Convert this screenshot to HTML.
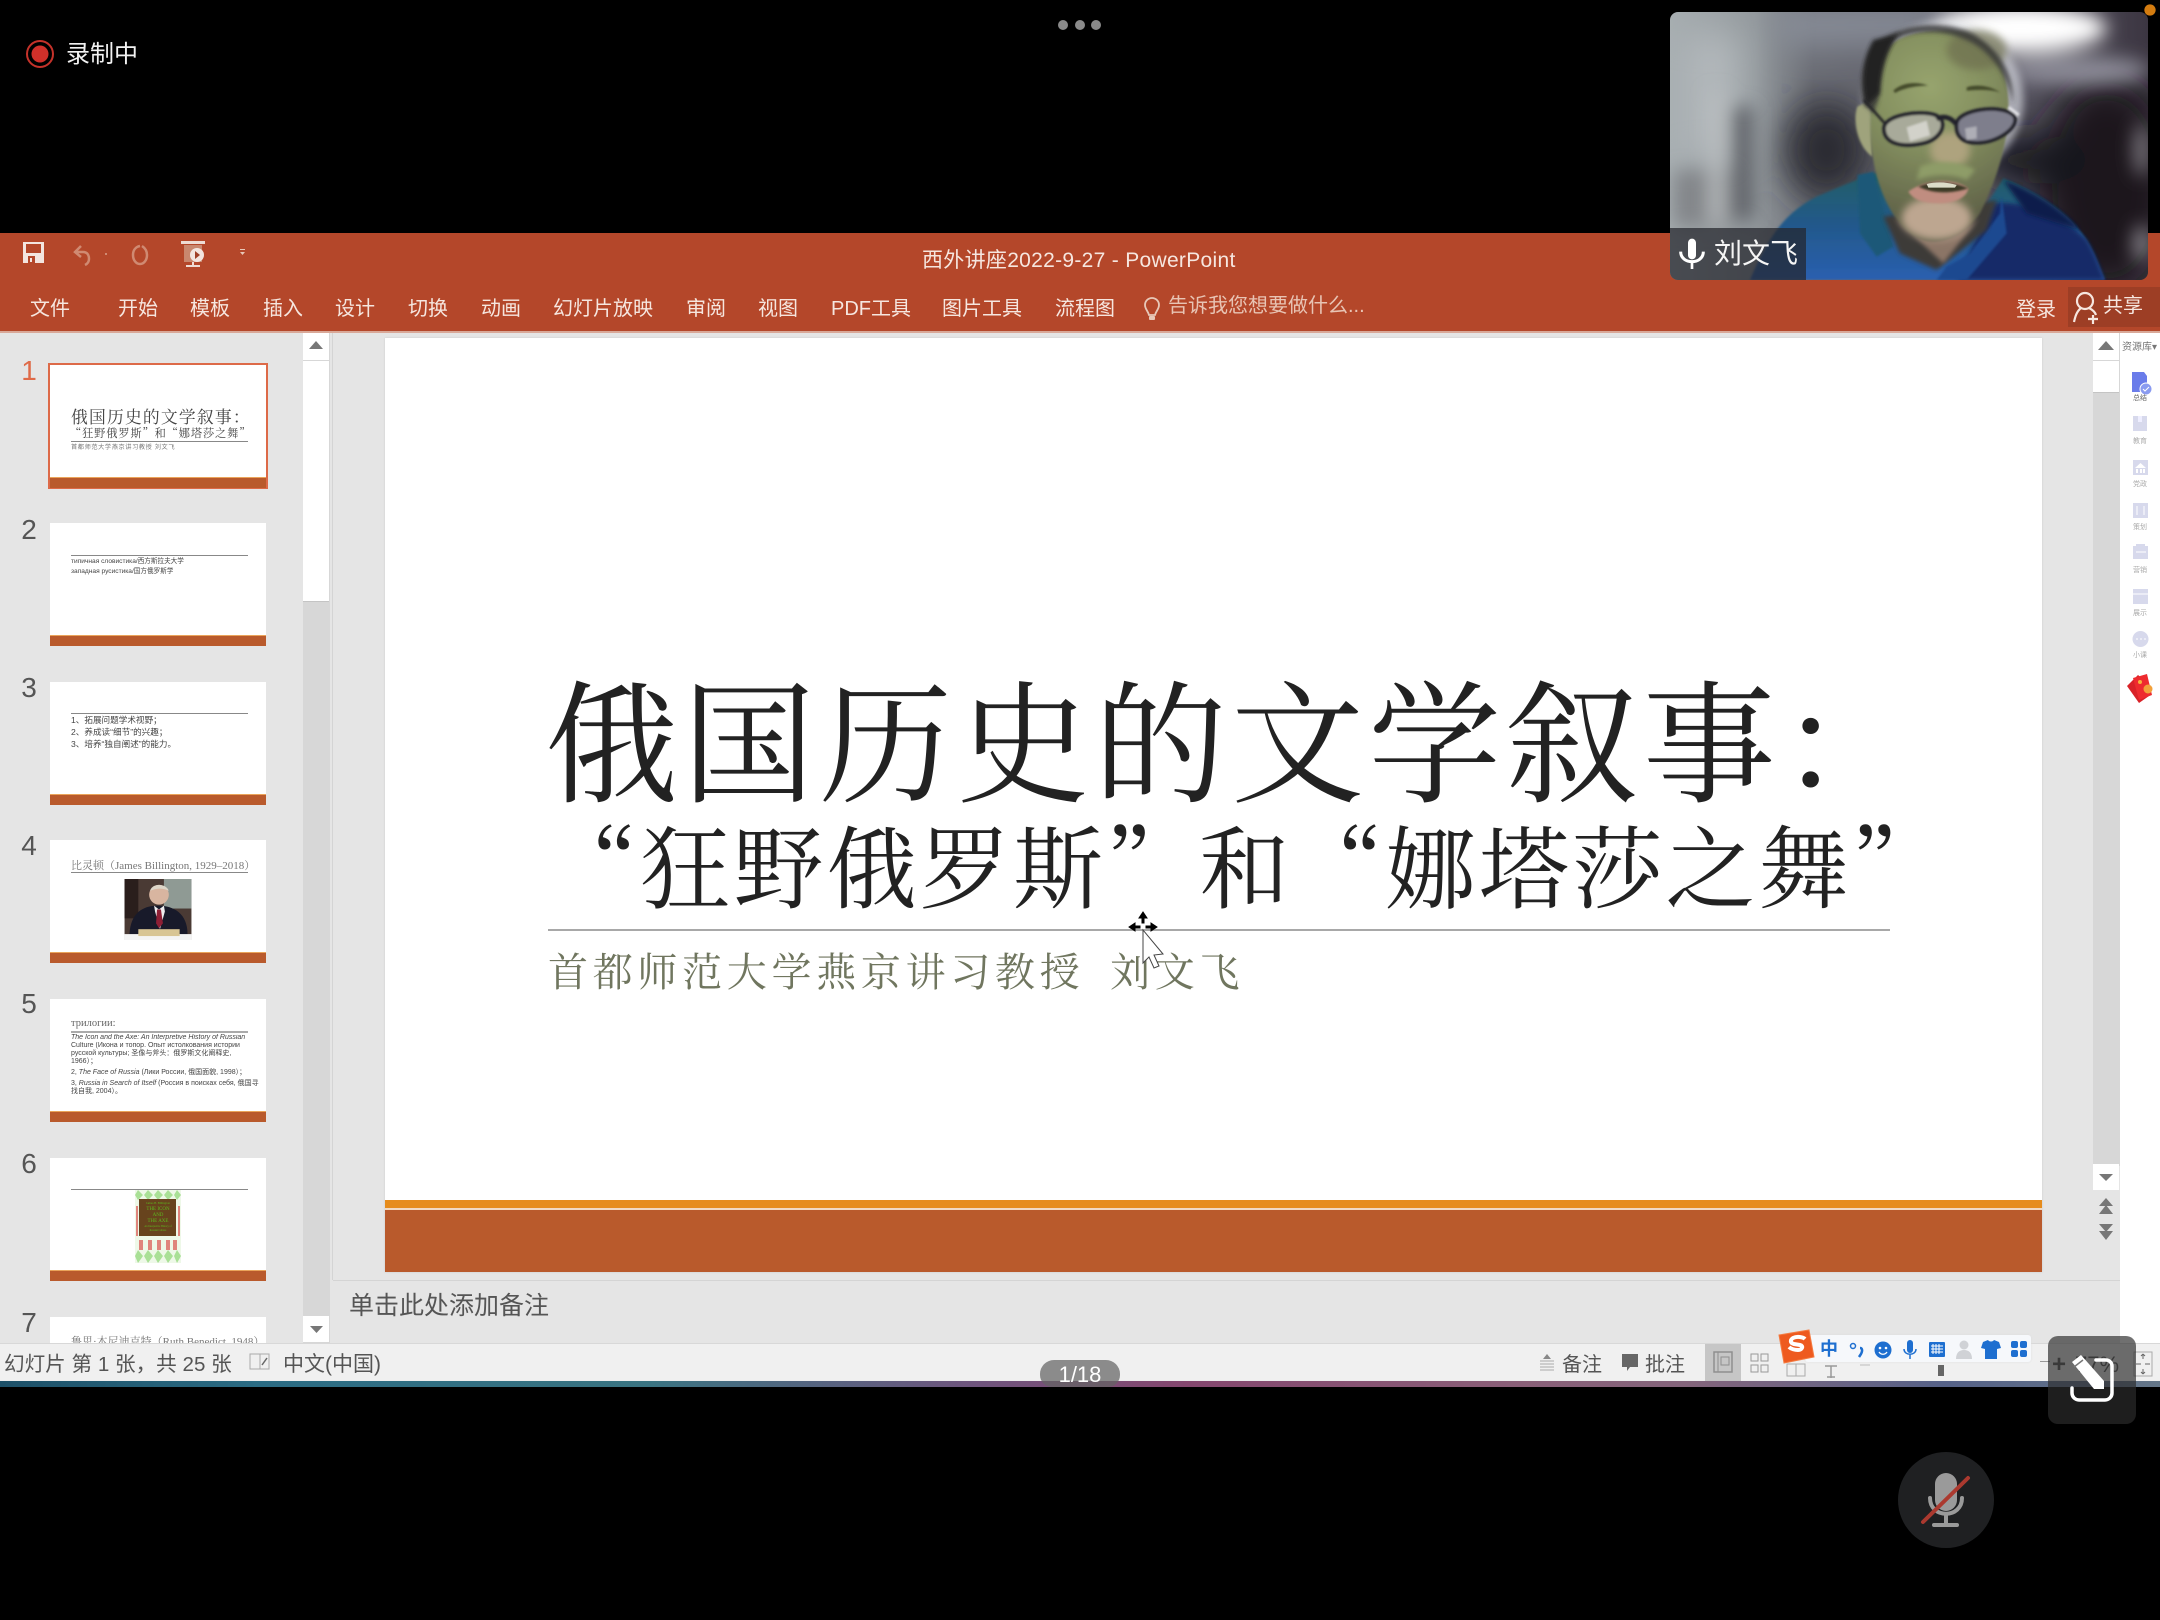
<!DOCTYPE html>
<html lang="zh"><head><meta charset="utf-8"><title>西外讲座</title>
<style>
html,body{margin:0;padding:0;background:#000}
body{width:2160px;height:1620px;position:relative;overflow:hidden;font-family:"Liberation Sans","Noto Sans CJK SC",sans-serif;color:#444}
.a{position:absolute}
.t{position:absolute;white-space:nowrap;line-height:1}
.tab{position:absolute;top:298px;font-size:20px;line-height:22px;color:#f6e6df;white-space:nowrap}
.n{position:absolute;left:20px;font-size:28px;line-height:28px;color:#555;width:18px;text-align:center}
.th{position:absolute;left:50px;width:216px;height:123px;background:#fff;overflow:hidden}
.th .bar{position:absolute;left:0;right:0;bottom:0;height:10px;background:#b95a2c;border-top:1px solid #eaa45a}
.th .ln{position:absolute;left:21px;width:177px;height:1px;background:#888}
.th .s{position:absolute;white-space:nowrap;color:#555;line-height:1;filter:blur(.35px)}
.lb{position:absolute;left:2125px;width:30px;text-align:center;font-size:7px;line-height:8px;color:#aaa}
.serif{font-family:"Liberation Serif","Noto Serif CJK SC",serif}
.cjk{font-family:"Noto Serif CJK SC","Liberation Serif",serif}
</style></head><body>

<!-- ribbon -->
<div class="a" style="left:0;top:233px;width:2160px;height:98px;background:#b4472a"></div>
<div class="a" style="left:0;top:331px;width:2160px;height:2px;background:#d9a898"></div>
<!-- app background -->
<div class="a" style="left:0;top:333px;width:2120px;height:1010px;background:#e5e5e5"></div>
<div class="a" style="left:2120px;top:333px;width:40px;height:1010px;background:#fff"></div>

<!-- QAT -->
<svg class="a" style="left:20px;top:238px" width="230" height="32" viewBox="0 0 230 32">
<path d="M3 4H24V25H3Z" fill="#f3e5df"/><rect x="6" y="6" width="15" height="9" fill="#b4472a"/><rect x="8" y="18" width="7" height="7" fill="#b4472a"/><rect x="10" y="20" width="2" height="4" fill="#f3e5df"/>
<path d="M61 8l-6 6 6 5M55 14h8c5 0 6 4 6 7s-2 5-4 6" fill="none" stroke="#d08a72" stroke-width="2.5"/>
<rect x="85" y="15" width="2" height="2" fill="#d08a72"/>
<path d="M120 8c-5 1-7 5-7 9 0 5 3 9 7 9s7-4 7-9c0-4-2-7-5-9" fill="none" stroke="#d08a72" stroke-width="2.500"/>
<rect x="161" y="3" width="24" height="3" fill="#eedcd4"/>
<path d="M164 7H182V24H164Z" fill="#c9876e"/><circle cx="177" cy="17" r="7" fill="#f3e5df"/><path d="M175 13l5 4-5 4Z" fill="#a04027"/><path d="M172 24v3h-6v2h14v-2h-6v-3Z" fill="#eedcd4"/>
<path d="M220 14h5l-2.500 3ZM220 11h5v1h-5Z" fill="#e8c8b8"/>
</svg>
<div class="t" style="left:922px;top:250px;font-size:21px;line-height:22px;color:#f6e6df;letter-spacing:.3px">西外讲座2022-9-27 - PowerPoint</div>

<div class="tab" style="left:30px">文件</div><div class="tab" style="left:118px">开始</div><div class="tab" style="left:190px">模板</div><div class="tab" style="left:263px">插入</div><div class="tab" style="left:335px">设计</div><div class="tab" style="left:408px">切换</div><div class="tab" style="left:481px">动画</div><div class="tab" style="left:553px">幻灯片放映</div><div class="tab" style="left:686px">审阅</div><div class="tab" style="left:758px">视图</div><div class="tab" style="left:831px">PDF工具</div><div class="tab" style="left:942px">图片工具</div><div class="tab" style="left:1055px">流程图</div>
<svg class="a" style="left:1143px;top:295px" width="18" height="28" viewBox="0 0 18 28"><path d="M9 3a7 7 0 0 0-7 7c0 4 3 6 4 10h6c1-4 4-6 4-10a7 7 0 0 0-7-7Z" fill="none" stroke="#e8c8b8" stroke-width="1.800"/><rect x="6" y="21" width="6" height="4" rx="1" fill="#e8c8b8"/></svg>
<div class="tab" style="left:1168px;top:295px;color:#e8c4b4">告诉我您想要做什么...</div>
<div class="tab" style="left:2016px;top:299px">登录</div>
<div class="a" style="left:2068px;top:287px;width:92px;height:40px;background:#9d3e25"></div>
<svg class="a" style="left:2072px;top:290px" width="30" height="36" viewBox="0 0 30 36"><circle cx="13" cy="11" r="8" fill="none" stroke="#f6e6df" stroke-width="2.200"/><path d="M9 18C4 22 3 28 2 32M17 18c4 2 6 4 7 7" fill="none" stroke="#f6e6df" stroke-width="2.200"/><path d="M21 25v9M16 29h10" stroke="#f6e6df" stroke-width="2.200"/></svg>
<div class="tab" style="left:2103px;top:295px">共享</div>

<!-- thumbs panel -->
<div class="n" style="top:357px;color:#df6a48">1</div>
<div class="a" style="left:48px;top:363px;width:216px;height:122px;border:2px solid #dd6a48;background:#fff"></div>
<div class="th" style="top:365px;height:123px">
  <div class="s serif" style="left:21px;top:45px;font-size:16.800px;letter-spacing:1.200px;color:#444">俄国历史的文学叙事：</div>
  <div class="s cjk" style="left:20px;top:63px;font-size:11.200px;letter-spacing:.9px;color:#444">“狂野俄罗斯”和“娜塔莎之舞”</div>
  <div class="ln" style="top:76px"></div>
  <div class="s" style="left:21px;top:80px;font-size:6.200px;color:#777;letter-spacing:.6px">首都师范大学燕京讲习教授 刘文飞</div>
  <div class="bar"></div>
</div>
<div class="n" style="top:516px">2</div>
<div class="th" style="top:523px">
  <div class="ln" style="top:32px"></div>
  <div class="s" style="left:21px;top:36px;font-size:6.600px;color:#444">типичная словистика/西方斯拉夫大学</div>
  <div class="s" style="left:21px;top:46px;font-size:6.600px;color:#444">западная русистика/国方俄罗斯学</div>
  <div class="bar"></div>
</div>
<div class="n" style="top:674px">3</div>
<div class="th" style="top:682px">
  <div class="ln" style="top:31px"></div>
  <div class="s" style="left:21px;top:34px;font-size:8.600px;color:#444">1、拓展问题学术视野；</div>
  <div class="s" style="left:21px;top:46px;font-size:8.600px;color:#444">2、养成读“细节”的兴趣；</div>
  <div class="s" style="left:21px;top:58px;font-size:8.600px;color:#444">3、培养“独自阐述”的能力。</div>
  <div class="bar"></div>
</div>
<div class="n" style="top:832px">4</div>
<div class="th" style="top:840px">
  <div class="s serif" style="left:21px;top:21px;font-size:11px;color:#777">比灵顿（James Billington, 1929–2018）</div>
  <div class="ln" style="top:32px"></div>
  <svg class="a" style="left:74px;top:39px" width="68" height="61" viewBox="0 0 68 62"><rect width="68" height="62" fill="#4a3a34"/><rect x="40" width="28" height="30" fill="#8f9a94"/><rect x="0" width="14" height="40" fill="#2a1e1c"/><path d="M5 56C6 35 18 27 34 27s30 8 30 29Z" fill="#181a2a"/><circle cx="35" cy="16" r="10" fill="#d8b5a0"/><path d="M26 12c2-8 16-8 19 0-6-3-12-3-19 0Z" fill="#ddd6c8"/><path d="M30 27l5 4 5-4 1 6-5 18-5-18Z" fill="#eee"/><path d="M33 31h4l2 14-4 5-3-5Z" fill="#8e1f35"/><rect x="0" y="56" width="68" height="6" fill="#f4f4f4"/><rect x="14" y="51" width="42" height="7" fill="#d8c594"/></svg>
  <div class="bar"></div>
</div>
<div class="n" style="top:990px">5</div>
<div class="th" style="top:999px">
  <div class="s serif" style="left:21px;top:20px;font-size:10.500px;color:#666">трилогии:</div>
  <div class="a" style="left:21px;top:32px;width:177px;height:2px;background:#aaa"></div>
  <div class="s" style="left:21px;top:35px;font-size:7px;color:#444"><i>The Icon and the Axe: An Interpretive History of Russian</i></div>
  <div class="s" style="left:21px;top:43px;font-size:7px;color:#444">Culture (Икона и топор. Опыт истолкования истории</div>
  <div class="s" style="left:21px;top:51px;font-size:7px;color:#444">русской культуры; 圣像与斧头：俄罗斯文化阐释史,</div>
  <div class="s" style="left:21px;top:59px;font-size:7px;color:#444">1966）；</div>
  <div class="s" style="left:21px;top:70px;font-size:7px;color:#444">2, <i>The Face of Russia</i> (Лики России, 俄国面貌, 1998）；</div>
  <div class="s" style="left:21px;top:81px;font-size:7px;color:#444">3, <i>Russia in Search of Itself</i> (Россия в поисках себя, 俄国寻</div>
  <div class="s" style="left:21px;top:89px;font-size:7px;color:#444">找自我, 2004）。</div>
  <div class="bar"></div>
</div>
<div class="n" style="top:1150px">6</div>
<div class="th" style="top:1158px">
  <div class="ln" style="top:31px"></div>
  <svg class="a" style="left:85px;top:32px" width="46" height="73" viewBox="0 0 46 73"><rect width="46" height="73" fill="#eef8e8"/><g fill="#a9e096"><path d="M3 0l5 5-5 5-3-5ZM13 0l5 5-5 5-4-5ZM23 0l5 5-5 5-4-5ZM33 0l5 5-5 5-4-5ZM42 0l4 5-4 5-3-5Z"/><path d="M3 60l5 6-5 7-3-7ZM13 60l5 6-5 7-4-7ZM23 60l5 6-5 7-4-7ZM33 60l5 6-5 7-4-7ZM42 60l4 6-4 7-3-7Z"/></g><g fill="#e0847c"><rect x="1" y="16" width="2" height="30"/><rect x="43" y="16" width="2" height="30"/><rect x="4" y="50" width="4" height="10"/><rect x="13" y="50" width="4" height="10"/><rect x="22" y="50" width="4" height="10"/><rect x="31" y="50" width="4" height="10"/><rect x="38" y="50" width="4" height="10"/></g><rect x="4" y="9" width="37" height="37" fill="#67431d"/><g fill="#5dbb1e" font-family="Liberation Serif,serif" text-anchor="middle"><text x="23" y="14" font-size="3">James H. Billington</text><text x="23" y="20" font-size="5">THE ICON</text><text x="23" y="26" font-size="5">AND</text><text x="23" y="32" font-size="5">THE AXE</text><text x="23" y="37" font-size="2.600">An Interpretive History of</text><text x="23" y="41" font-size="2.600">Russian Culture</text></g></svg>
  <div class="bar"></div>
</div>
<div class="n" style="top:1309px">7</div>
<div class="th" style="top:1317px;height:26px">
  <div class="s serif" style="left:21px;top:20px;font-size:11px;color:#777">鲁思·本尼迪克特（Ruth Benedict, 1948）</div>
</div>

<!-- thumb scrollbar -->
<div class="a" style="left:303px;top:333px;width:27px;height:1010px;background:#d7d7d7"></div>
<div class="a" style="left:332px;top:333px;width:1px;height:947px;background:#d4d4d4"></div>
<div class="a" style="left:303px;top:333px;width:26px;height:27px;background:#fff"></div>
<div class="a" style="left:303px;top:361px;width:26px;height:240px;background:#fff;border-bottom:1px solid #c4c4c4"></div>
<div class="a" style="left:303px;top:1316px;width:26px;height:26px;background:#fff"></div>
<svg class="a" style="left:303px;top:333px" width="26" height="27"><path d="M6 16L13 8L20 16Z" fill="#777"/></svg>
<svg class="a" style="left:303px;top:1316px" width="26" height="26"><path d="M7 10H20L13.500 17Z" fill="#777"/></svg>

<!-- slide -->
<div class="a" style="left:385px;top:338px;width:1657px;height:934px;background:#fff;box-shadow:0 0 2px #ccc"></div>
<div class="a" style="left:385px;top:1200px;width:1657px;height:8px;background:#e68c1c"></div>
<div class="a" style="left:385px;top:1208px;width:1657px;height:2px;background:#f1d9c2"></div>
<div class="a" style="left:385px;top:1210px;width:1657px;height:62px;background:#b95a2c"></div>

<div class="t serif" style="left:545px;top:672px;font-size:133px;line-height:150px;letter-spacing:4.200px;color:#222">俄国历史的文学叙事：</div>
<div class="t cjk" style="left:547px;top:807px;font-size:90px;line-height:110px;letter-spacing:3.200px;color:#222">“狂野俄罗斯”和“娜塔莎之舞”</div>
<div class="a" style="left:548px;top:929px;width:1342px;height:2px;background:#a8a8a8"></div>
<div class="t serif" style="left:548px;top:950px;font-size:40px;line-height:46px;letter-spacing:4.700px;color:#70765f">首都师范大学燕京讲习教授<span style="letter-spacing:1px">&nbsp;</span>&nbsp;刘文飞</div>

<!-- cursor -->
<svg class="a" style="left:1125px;top:910px" width="50" height="60" viewBox="0 0 50 60">
<path d="M18 20V53L24 47L29 58L34 56L29 45L38 44Z" fill="#fff" stroke="#444" stroke-width="1"/>
<path d="M18 2l-4 6h3v5h2v-5h3ZM4 17l6-4v3h5v2h-5v3ZM32 17l-6-4v3h-5v2h5v3Z" fill="#000" stroke="#000" stroke-width="1"/>
</svg>

<!-- main scrollbar -->
<div class="a" style="left:2093px;top:333px;width:27px;height:947px;background:#e5e5e5"></div>
<div class="a" style="left:2093px;top:333px;width:27px;height:833px;background:#d7d7d7"></div>
<div class="a" style="left:2093px;top:333px;width:26px;height:27px;background:#fff"></div>
<div class="a" style="left:2093px;top:361px;width:26px;height:31px;background:#fff;border-bottom:1px solid #c4c4c4"></div>
<div class="a" style="left:2093px;top:1164px;width:26px;height:26px;background:#fff"></div>
<svg class="a" style="left:2093px;top:333px" width="26" height="27"><path d="M5 17L13 8L21 17Z" fill="#777"/></svg>
<svg class="a" style="left:2093px;top:1164px" width="26" height="26"><path d="M6 10H20L13 17Z" fill="#777"/></svg>
<svg class="a" style="left:2093px;top:1196px" width="26" height="50"><path d="M13 2L20 10H6ZM13 9L20 18H6ZM6 28H20L13 36ZM6 35H20L13 44Z" fill="#777"/></svg>

<!-- notes -->
<div class="a" style="left:333px;top:1280px;width:1787px;height:1px;background:#d4d4d4"></div>
<div class="t" style="left:349px;top:1292px;font-size:25px;line-height:28px;color:#555">单击此处添加备注</div>

<!-- right sidebar -->
<div class="t" style="left:2122px;top:342px;font-size:10px;line-height:11px;color:#777">资源库▾</div>
<svg class="a" style="left:2128px;top:370px" width="26" height="300" viewBox="0 0 26 300">
<path d="M4 2H16L19 6V22H4Z" fill="#6a7cea"/><circle cx="18" cy="19" r="6" fill="#8a9bf0" stroke="#fff"/><path d="M15 19l2 2 4-4" stroke="#fff" fill="none"/>
<rect x="5" y="46" width="14" height="15" fill="#d7d9ec"/><rect x="10" y="46" width="4" height="6" fill="#eef"/>
<rect x="5" y="90" width="15" height="15" fill="#d7d9ec"/><path d="M7 98h11l-5.500-5ZM8 99h2v4H8ZM12 99h2v4h-2ZM15 99h2v4h-2Z" fill="#fff"/>
<rect x="5" y="133" width="15" height="15" fill="#d7d9ec"/><path d="M9 136v9M16 136v9" stroke="#fff"/>
<path d="M5 176h3v-2h9v2h3v13H5Z" fill="#d7d9ec"/><path d="M8 182h10" stroke="#fff"/>
<rect x="5" y="219" width="15" height="15" fill="#d7d9ec"/><path d="M5 224h15" stroke="#fff"/>
<circle cx="12.500" cy="269" r="8" fill="#d7d9ec"/><path d="M8 269h2M12 269h2M16 269h2" stroke="#fff"/>
</svg>
<div class="lb" style="top:395px;color:#666">总结</div><div class="lb" style="top:438px">教育</div><div class="lb" style="top:481px">党政</div><div class="lb" style="top:524px">策划</div><div class="lb" style="top:567px">营销</div><div class="lb" style="top:610px">展示</div><div class="lb" style="top:652px">小课</div>
<svg class="a" style="left:2125px;top:672px" width="30" height="32" viewBox="0 0 30 32"><path d="M2 14L13 3L20 9L24 24L14 31Z" fill="#d92228"/><path d="M8 6L22 2L27 23L14 28Z" fill="#ee2b2f"/><circle cx="15" cy="10" r="2" fill="#f7b23a"/><circle cx="23" cy="17" r="4.500" fill="#f3a03a"/></svg>

<!-- status bar -->
<div class="a" style="left:0;top:1343px;width:2160px;height:38px;background:#f0f0f0;border-top:1px solid #d8d8d8;box-sizing:border-box"></div>
<div class="a" style="left:0;top:1381px;width:2160px;height:6px;background:linear-gradient(90deg,#1d5068 0,#2b6c84 12%,#3a7482 30%,#6f557e 45%,#85476f 55%,#8a5f78 70%,#85657c 78%,#566288 90%,#647688 100%)"></div>
<div class="t" style="left:4px;top:1353px;font-size:20.600px;line-height:24px;color:#555">幻灯片 第 1 张，共 25 张</div>
<svg class="a" style="left:249px;top:1352px" width="22" height="20" viewBox="0 0 22 20"><rect x="1" y="2" width="10" height="15" fill="none" stroke="#aaa"/><rect x="11" y="2" width="9" height="15" fill="none" stroke="#aaa"/><path d="M13 13l5-7" stroke="#666" stroke-width="1.500"/></svg>
<div class="t" style="left:283px;top:1353px;font-size:21px;line-height:24px;color:#555">中文(中国)</div>

<svg class="a" style="left:1538px;top:1352px" width="18" height="22" viewBox="0 0 18 22"><path d="M9 2l4 5H5Z" fill="#888"/><path d="M2 9h14M2 12h14M2 15h14M2 18h14" stroke="#aaa"/></svg>
<div class="t" style="left:1562px;top:1353px;font-size:20px;line-height:24px;color:#555">备注</div>
<svg class="a" style="left:1620px;top:1352px" width="20" height="22" viewBox="0 0 20 22"><path d="M2 2H18V15H10L7 19V15H2Z" fill="#666"/></svg>
<div class="t" style="left:1645px;top:1353px;font-size:20px;line-height:24px;color:#555">批注</div>
<div class="a" style="left:1705px;top:1344px;width:36px;height:37px;background:#c6c6c6"></div>
<svg class="a" style="left:1712px;top:1350px" width="24" height="24" viewBox="0 0 24 24"><rect x="2" y="2" width="18" height="20" fill="none" stroke="#8f8f8f" stroke-width="1.500"/><path d="M6 2v20" stroke="#8f8f8f"/><rect x="9" y="7" width="8" height="8" fill="none" stroke="#8f8f8f"/></svg>
<svg class="a" style="left:1749px;top:1352px" width="22" height="22"><path d="M2 2h7v7H2ZM12 2h7v7h-7ZM2 13h7v7H2ZM12 13h7v7h-7Z" fill="none" stroke="#999"/></svg>
<svg class="a" style="left:1784px;top:1362px" width="200" height="18" viewBox="0 0 200 18"><rect x="3" y="2" width="18" height="12" fill="none" stroke="#aaa"/><path d="M12 2v12" stroke="#aaa"/><path d="M41 4h12M47 4v12M43 15h8" stroke="#999" stroke-width="1.500"/><path d="M76 3h10" stroke="#bbb"/><rect x="154" y="3" width="6" height="11" fill="#666"/></svg>
<div class="a" style="left:2040px;top:1361px;width:10px;height:1px;background:#999"></div>
<div class="t" style="left:2052px;top:1352px;font-size:24px;line-height:26px;color:#555;font-weight:bold">+</div>
<div class="t" style="left:2075px;top:1352px;font-size:22px;line-height:26px;color:#555">77%</div>
<svg class="a" style="left:2133px;top:1351px" width="20" height="26" viewBox="0 0 20 26"><rect x="1" y="1" width="18" height="24" fill="none" stroke="#aaa"/><path d="M10 3v5M10 18v5M3 13h5M12 13h5M10 3l-2 2M10 3l2 2M10 23l-2-2M10 23l2-2" stroke="#666"/></svg>

<!-- page pill -->
<div class="a" style="left:1040px;top:1360px;width:80px;height:27px;background:rgba(100,100,100,.72);border-radius:14px 14px 12px 12px"></div>
<div class="t" style="left:1040px;top:1362px;width:80px;text-align:center;font-size:22px;line-height:25px;color:#fff">1/18</div>

<!-- IME -->
<div class="a" style="left:1805px;top:1335px;width:226px;height:27px;background:#f6f8fb;border-radius:3px;box-shadow:0 0 2px #ddd"></div>
<svg class="a" style="left:1776px;top:1328px" width="42" height="38" viewBox="0 0 42 38"><path d="M3 7L33 2L38 29L8 35Z" fill="#ee5a1f" stroke="#f47b41"/><path d="M29 11c-2-2-8-3-12-1-3 2-3 5 1 6l6 1c4 1 2 5-2 5-3 0-7-1-9-3" fill="none" stroke="#fff" stroke-width="4"/></svg>
<div class="t" style="left:1820px;top:1339px;font-size:18px;line-height:20px;color:#1e6fd0;font-weight:bold">中</div>
<svg class="a" style="left:1848px;top:1338px" width="190" height="24" viewBox="0 0 190 24">
<circle cx="5" cy="8" r="2.500" fill="none" stroke="#1e6fd0" stroke-width="1.500"/><path d="M12 10c2 0 3 2 1 6l-2 3" stroke="#1e6fd0" stroke-width="2.500" fill="none"/>
<circle cx="35" cy="12" r="8.500" fill="#1e6fd0"/><circle cx="32" cy="10" r="1.300" fill="#fff"/><circle cx="38" cy="10" r="1.300" fill="#fff"/><path d="M31 14c2 3 6 3 8 0" stroke="#fff" stroke-width="1.300" fill="none"/>
<rect x="59" y="2" width="6" height="13" rx="3" fill="#1e6fd0"/><path d="M56 11c0 7 12 7 12 0M62 17v4" stroke="#1e6fd0" stroke-width="1.500" fill="none"/>
<rect x="81" y="4" width="16" height="15" rx="1" fill="#1e6fd0"/><path d="M83 8h12M83 11h12M83 14h12M85 6v10M88 6v10M91 6v10" stroke="#fff" stroke-width="1"/>
<circle cx="116" cy="7" r="4.500" fill="#d0d2d6"/><path d="M108 21c0-6 3-9 8-9s8 3 8 9Z" fill="#d0d2d6"/>
<path d="M135 4l5-2c1 2 5 2 6 0l5 2 2 6-4 1v10h-12V11l-4-1Z" fill="#1e6fd0"/>
<rect x="163" y="3" width="7" height="7" rx="2" fill="#1e6fd0"/><rect x="172" y="3" width="7" height="7" rx="2" fill="#1e6fd0"/><rect x="163" y="12" width="7" height="7" rx="2" fill="#1e6fd0"/><rect x="172" y="12" width="7" height="7" rx="2" fill="#1e6fd0"/>
</svg>

<!-- edit button -->
<div class="a" style="left:2048px;top:1336px;width:88px;height:88px;background:rgba(44,44,44,.68);border-radius:10px"></div>
<svg class="a" style="left:2048px;top:1336px" width="88" height="88" viewBox="0 0 88 88">
<path d="M48 24h10a6 6 0 0 1 6 6v27a7 7 0 0 1-7 7H31a7 7 0 0 1-7-7V52" fill="none" stroke="#fff" stroke-width="3.500" stroke-linecap="round"/>
<path d="M24 26l9-7 23 26v8H46Z" fill="#fff"/><path d="M26 31l9-7" stroke="#777" stroke-width="1.500"/>
</svg>

<!-- mic -->
<div class="a" style="left:1898px;top:1452px;width:96px;height:96px;border-radius:50%;background:#1f2022"></div>
<svg class="a" style="left:1898px;top:1452px" width="96" height="96" viewBox="0 0 96 96">
<rect x="37" y="21" width="22" height="38" rx="11" fill="#9a9a9a"/>
<path d="M32 46c0 21 32 21 32 0M48 62v11M36 73h23" fill="none" stroke="#9a9a9a" stroke-width="4" stroke-linecap="round"/>
<path d="M25 70L70 26" stroke="#ab392f" stroke-width="4" stroke-linecap="round"/>
</svg>

<!-- top bar -->
<svg class="a" style="left:25px;top:39px" width="30" height="30"><circle cx="15" cy="15" r="13" fill="none" stroke="#c5322a" stroke-width="2"/><circle cx="15" cy="15" r="8.500" fill="#d0302a"/></svg>
<div class="t" style="left:66px;top:41px;font-size:24px;line-height:28px;color:#f2f2f2">录制中</div>
<div class="a" style="left:1058px;top:20px;width:10px;height:10px;border-radius:50%;background:#8a8a8a"></div>
<div class="a" style="left:1075px;top:20px;width:10px;height:10px;border-radius:50%;background:#8a8a8a"></div>
<div class="a" style="left:1091px;top:20px;width:10px;height:10px;border-radius:50%;background:#8a8a8a"></div>

<!-- video -->
<svg class="a" style="left:1660px;top:0" width="500" height="340" viewBox="0 0 1500 1020">
<defs>
<clipPath id="v"><rect x="30" y="36" width="1434" height="804" rx="24"/></clipPath>
<linearGradient id="bg" x1="0" x2="1" y1="0" y2="0"><stop offset="0" stop-color="#a6adb0"/><stop offset=".18" stop-color="#92989c"/><stop offset=".3" stop-color="#6a6c74"/><stop offset=".7" stop-color="#5a5864"/><stop offset="1" stop-color="#3c3642"/></linearGradient>
<filter id="b60" filterUnits="userSpaceOnUse" x="-300" y="-300" width="2200" height="1700"><feGaussianBlur stdDeviation="55"/></filter>
<filter id="b30" filterUnits="userSpaceOnUse" x="-300" y="-300" width="2200" height="1700"><feGaussianBlur stdDeviation="28"/></filter>
<filter id="b12" filterUnits="userSpaceOnUse" x="-300" y="-300" width="2200" height="1700"><feGaussianBlur stdDeviation="12"/></filter>
<filter id="b6" filterUnits="userSpaceOnUse" x="-300" y="-300" width="2200" height="1700"><feGaussianBlur stdDeviation="6"/></filter>
<filter id="b3" filterUnits="userSpaceOnUse" x="-300" y="-300" width="2200" height="1700"><feGaussianBlur stdDeviation="3"/></filter>
<radialGradient id="sk" gradientUnits="userSpaceOnUse" cx="810" cy="260" r="430"><stop offset="0" stop-color="#97a46e"/><stop offset=".45" stop-color="#828d5e"/><stop offset="1" stop-color="#5c5d46"/></radialGradient>
<linearGradient id="sh" x1="0" x2="0" y1="0" y2="1"><stop offset="0" stop-color="#1f5d66"/><stop offset=".5" stop-color="#23598c"/><stop offset="1" stop-color="#2a5fb0"/></linearGradient>
</defs>
<g clip-path="url(#v)">
<rect x="30" y="36" width="1434" height="804" fill="url(#bg)"/>
<g filter="url(#b60)">
<rect x="350" y="20" width="500" height="110" fill="#8d939e"/>
<ellipse cx="500" cy="450" rx="130" ry="150" fill="#2a2b30"/>
<rect x="70" y="100" width="170" height="380" fill="#b2b8bb"/>
<ellipse cx="1340" cy="560" rx="200" ry="320" fill="#1b151d"/>
<ellipse cx="1120" cy="480" rx="180" ry="70" fill="#17171b"/>
</g>
<g filter="url(#b30)">
<ellipse cx="1080" cy="85" rx="260" ry="70" fill="#fff"/>
<ellipse cx="1250" cy="210" rx="220" ry="45" fill="#8b8a96"/>
<rect x="40" y="510" width="180" height="170" fill="#83868a"/>
<rect x="150" y="280" width="40" height="390" fill="#b9bdbf"/>
<rect x="220" y="320" width="60" height="340" fill="#5f6268"/>
<ellipse cx="1445" cy="450" rx="22" ry="80" fill="#86838a"/><ellipse cx="1445" cy="730" rx="22" ry="55" fill="#9a979e"/>
</g>
<!-- halo -->
<ellipse cx="850" cy="300" rx="240" ry="235" fill="#d7d9e0" opacity=".65" filter="url(#b12)"/>
<!-- shirt -->
<path d="M270 840C320 720 370 640 470 590C540 560 600 535 650 518C700 640 800 740 840 800C880 740 980 620 1030 535C1120 570 1230 640 1280 720C1310 770 1320 810 1335 840Z" fill="url(#sh)" filter="url(#b3)"/>
<path d="M1000 610C1100 600 1220 660 1280 720C1310 770 1320 810 1335 840H890Z" fill="#132a68" filter="url(#b6)"/>
<path d="M1030 540C1110 570 1200 620 1260 690L1100 640Z" fill="#0f1f4c" filter="url(#b6)"/>
<path d="M592 525L640 515L700 740L650 770L600 700Z" fill="#1b5878" filter="url(#b3)"/>
<path d="M1025 590L1020 640L930 760L860 800L830 840L920 840L1040 700Z" fill="#1a4990" filter="url(#b3)"/>
<path d="M670 650L720 760L830 810L980 690L1010 600Z" fill="#3c3a38" filter="url(#b6)"/>
<path d="M700 650C760 740 880 740 960 650L850 790Z" fill="#8b7566" filter="url(#b6)"/>
<!-- head -->
<path d="M592 320c-15 40 0 120 45 150l-5-170Z" fill="#9fa37c" filter="url(#b3)"/>
<path d="M640 230C650 130 740 90 850 90C970 95 1040 170 1045 300C1050 420 1010 540 960 640C910 710 840 735 790 720C720 700 660 600 640 480C625 400 630 300 640 230Z" fill="url(#sk)" filter="url(#b3)"/>
<ellipse cx="830" cy="655" rx="105" ry="65" fill="#bda690" filter="url(#b12)"/>
<ellipse cx="870" cy="450" rx="60" ry="55" fill="#aea37e" filter="url(#b12)"/>
<ellipse cx="950" cy="150" rx="90" ry="60" fill="#6e7050" filter="url(#b12)" opacity=".7"/>
<path d="M610 310C590 190 640 130 700 100C770 65 900 65 960 115C1040 170 1062 250 1058 310C1048 240 1000 160 930 125C850 85 760 90 700 120C668 170 660 220 655 300L640 340Z" fill="#3a3a3a" opacity=".85" filter="url(#b6)"/>
<path d="M640 120C610 170 600 250 620 320L660 280C660 220 680 140 720 100Z" fill="#232323" filter="url(#b6)"/>
<path d="M700 272c25-25 70-28 105-15-30 0-70 5-100 22ZM920 262c30-10 70-5 100 15-35-10-70-8-100-5Z" fill="#454c2c" filter="url(#b3)"/>
<!-- glasses -->
<g filter="url(#b3)">
<path d="M672 385C672 345 780 330 825 345C868 362 845 415 795 428C725 445 672 430 672 385Z" fill="#a8aa9a" stroke="#20202a" stroke-width="11"/>
<path d="M890 370C895 330 1020 310 1060 345C1085 375 1020 425 960 428C910 432 885 410 890 370Z" fill="#7e7e8c" stroke="#20202a" stroke-width="11"/>
<path d="M830 358C850 345 872 352 888 372" fill="none" stroke="#20202a" stroke-width="14"/>
<path d="M612 300L676 372" stroke="#25252a" stroke-width="8"/>
<path d="M1046 322L1076 345" stroke="#e3e3e8" stroke-width="9"/>
<path d="M740 382l60-20 10 44-60 18Z" fill="#d2d2ca"/>
<path d="M915 385l35-6 0 36-30 5Z" fill="#aeaeb6"/>
</g>
<path d="M780 500C820 480 900 480 945 510L920 540C880 520 820 520 770 540Z" fill="#8e9c68" filter="url(#b6)"/>
<path d="M745 575C790 540 880 530 925 565C920 595 880 612 830 610C790 610 760 600 745 575Z" fill="#c08d80" filter="url(#b3)"/>
<path d="M775 560C820 540 880 545 925 565C870 582 820 582 775 560Z" fill="#3d3a26" filter="url(#b3)"/>
<path d="M800 552C830 544 860 546 890 555L885 563L805 563Z" fill="#dcdcc8"/>
<rect x="30" y="684" width="408" height="156" fill="#24262c" fill-opacity=".72"/>
</g>
<circle cx="1470" cy="30" r="17" fill="#d47c10"/>
<rect x="84" y="716" width="24" height="62" rx="12" fill="#fff"/>
<path d="M62 755c0 40 68 40 68 0" fill="none" stroke="#fff" stroke-width="9"/><rect x="92" y="785" width="8" height="22" fill="#fff"/>
</svg>
<div class="t" style="left:1714px;top:238px;font-size:28px;line-height:32px;color:#f5f5f5">刘文飞</div>

</body></html>
